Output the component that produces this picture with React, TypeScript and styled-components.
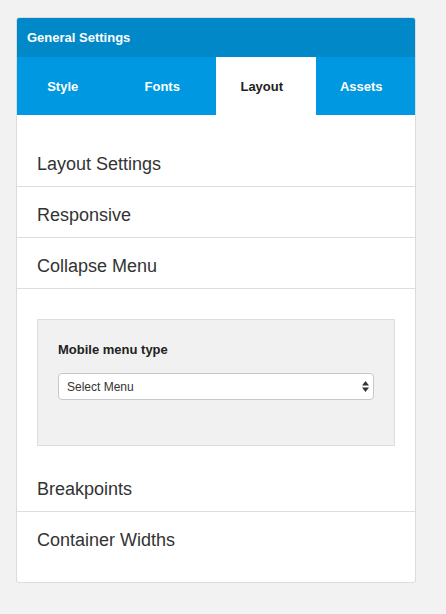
import React from "react";
import styled, { createGlobalStyle } from "styled-components";

const Global = createGlobalStyle`
  html, body { margin: 0; padding: 0; background: #f2f2f2; }
  body { font-family: "Liberation Sans", Arial, sans-serif; color: #333; }
  * { box-sizing: border-box; }
`;

const Page = styled.div`
  padding: 17px 16px;
`;

const Panel = styled.div`
  width: 400px;
  background: #fff;
  border: 1px solid #dcdcdc;
  border-radius: 3px;
  overflow: hidden;
`;

const Header = styled.div`
  height: 39px;
  background: #0088c8;
  color: #fff;
  font-size: 13px;
  font-weight: bold;
  display: flex;
  align-items: center;
  padding-left: 10px;
`;

const Tabs = styled.div`
  display: grid;
  grid-template-columns: repeat(4, 1fr);
  background: #0098e0;
`;

const Tab = styled.div<{ $active?: boolean }>`
  height: 58px;
  display: flex;
  align-items: center;
  justify-content: center;
  padding-right: 8px;
  font-size: 13px;
  font-weight: bold;
  color: ${(p) => (p.$active ? "#222" : "#fff")};
  background: ${(p) => (p.$active ? "#fff" : "transparent")};
`;

const Body = styled.div`
  padding: 21px 0 20px;
`;

const Row = styled.div<{ $last?: boolean }>`
  padding: 15px 20px 9px;
  font-size: 18px;
  line-height: 26px;
  color: #333;
  border-bottom: ${(p) => (p.$last ? "none" : "1px solid #dedede")};
`;

const Content = styled.div`
  padding: 30px 20px 15px;
`;

const Box = styled.div`
  background: #f1f1f1;
  border: 1px solid #dddddd;
  padding: 20px 20px 45px;
`;

const Label = styled.div`
  font-size: 13px;
  font-weight: bold;
  line-height: 20px;
  color: #222;
  margin-bottom: 13px;
`;

const SelectWrap = styled.div`
  position: relative;
`;

const Select = styled.select`
  appearance: none;
  -webkit-appearance: none;
  width: 100%;
  height: 27px;
  border: 1px solid #c8c8c8;
  border-radius: 4px;
  background: #fff;
  font-family: "Liberation Sans", Arial, sans-serif;
  font-size: 12px;
  color: #333;
  padding: 0 8px;
  outline: none;
`;

const Arrows = styled.svg`
  position: absolute;
  right: 5px;
  top: 8px;
  pointer-events: none;
`;

export default function App() {
  return (
    <>
      <Global />
      <Page>
        <Panel>
          <Header>General Settings</Header>
          <Tabs>
            <Tab>Style</Tab>
            <Tab>Fonts</Tab>
            <Tab $active>Layout</Tab>
            <Tab>Assets</Tab>
          </Tabs>
          <Body>
            <Row>Layout Settings</Row>
            <Row>Responsive</Row>
            <Row>Collapse Menu</Row>
            <Content>
              <Box>
                <Label>Mobile menu type</Label>
                <SelectWrap>
                  <Select defaultValue="">
                    <option value="">Select Menu</option>
                  </Select>
                  <Arrows width="7" height="11" viewBox="0 0 7 11">
                    <path d="M3.5 0 L7 4.5 L0 4.5 Z" fill="#333" />
                    <path d="M0 6.5 L7 6.5 L3.5 11 Z" fill="#333" />
                  </Arrows>
                </SelectWrap>
              </Box>
            </Content>
            <Row>Breakpoints</Row>
            <Row $last>Container Widths</Row>
          </Body>
        </Panel>
      </Page>
    </>
  );
}
